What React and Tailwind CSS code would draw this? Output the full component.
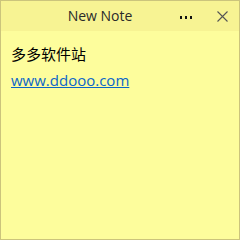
import React from "react";

const App = () => {
  return (
    <div className="w-[240px] h-[240px] border border-[#cbc47c] bg-[#fdfd9c] flex flex-col" style={{ fontFamily: '"Open Sans", "Noto Sans CJK SC", sans-serif' }}>
      <div className="h-[30px] bg-[#f7f393] flex items-center relative">
        <span className="absolute left-0 right-0 text-center text-[14px] text-[#2a2a2a] pr-[40px] pb-[1px]">New Note</span>
        <div className="ml-auto flex items-center">
          <span className="w-[40px] flex justify-center items-center gap-[3px] pt-[3px]">
            <span className="w-[2px] h-[3px] bg-[#111]" />
            <span className="w-[2px] h-[3px] bg-[#111]" />
            <span className="w-[2px] h-[3px] bg-[#111]" />
          </span>
          <svg width="32" height="30" viewBox="0 0 32 30" className="mr-[1px]">
            <path d="M11.5 10.5 L21.5 20.5 M21.5 10.5 L11.5 20.5" stroke="#555" strokeWidth="1.1" fill="none" />
          </svg>
        </div>
      </div>
      <div className="px-[10px] pt-[10px] text-[15px] leading-[26px]">
        <div className="text-black">多多软件站</div>
        <a href="#" className="text-[#0b66c9] underline">www.ddooo.com</a>
      </div>
    </div>
  );
};

export default App;
